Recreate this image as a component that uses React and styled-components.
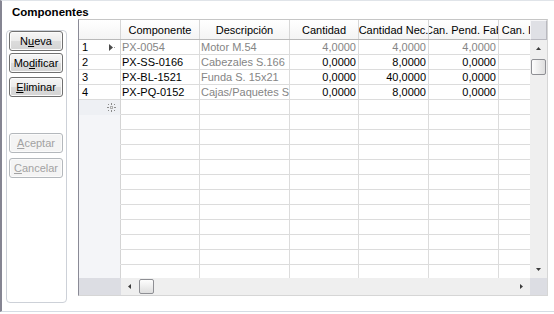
import React from "react";
import styled, { createGlobalStyle } from "styled-components";

const GlobalStyle = createGlobalStyle`
  body {
    margin: 0;
    background: #ffffff;
    font-family: "Liberation Sans", Arial, sans-serif;
    font-size: 11px;
    color: #000000;
  }
`;

const Frame = styled.div`
  width: 554px;
  box-sizing: border-box;
  border-left: 2px solid #858592;
  border-top: 1px solid #e0e4e9;
  border-bottom: 1px solid #d5dce4;
  padding-bottom: 8px;
`;

const Title = styled.div`
  height: 18px;
  box-sizing: border-box;
  padding: 5px 0 0 10px;
  line-height: 13px;
  font-size: 11.5px;
  font-weight: bold;
`;

const Body = styled.div`
  display: flex;
  align-items: flex-start;
  gap: 11px;
  padding-left: 4px;
`;

const ButtonBox = styled.div`
  margin-top: 11px;
  width: 61px;
  height: 273px;
  box-sizing: border-box;
  border: 1px solid #cdd1d8;
  border-radius: 4px;
  padding: 0 3px 0 2px;
  display: flex;
  flex-direction: column;
`;

const Btn = styled.button`
  margin-top: ${(p) => p.$gap || 0}px;
  width: 54px;
  height: 20px;
  padding: 0;
  box-sizing: border-box;
  font-family: "Liberation Sans", Arial, sans-serif;
  font-size: 11px;
  line-height: 18px;
  border-radius: 3px;
  border: 1px solid ${(p) => (p.disabled ? "#b4b8bc" : "#707070")};
  color: ${(p) => (p.disabled ? "#a2a2a2" : "#000000")};
  background: ${(p) =>
    p.disabled
      ? "#f4f4f4"
      : "linear-gradient(#f6f6f6 0%, #ebebeb 50%, #dcdcdc 51%, #d4d4d4 100%)"};
  box-shadow: inset 0 0 0 1px ${(p) => (p.disabled ? "#fbfbfb" : "#fbfbfb")};
  text-align: center;
`;

const Grid = styled.div`
  width: 470px;
  height: 277px;
  box-sizing: border-box;
  border: 1px solid;
  border-color: #c6c6c6 #d6d6d6 #d6d6d6 #8a8a96;
  display: grid;
  grid-template-columns: 451px 17px;
  grid-template-rows: 258px 17px;
`;

const DataArea = styled.div`
  overflow: hidden;
  display: flex;
  flex-direction: column;
`;

const HeaderRow = styled.div`
  display: flex;
  height: 20px;
  flex-shrink: 0;
  box-sizing: border-box;
  border-bottom: 1px solid #b9b9b9;
  background: linear-gradient(#ffffff, #f4f4f4);
`;

const HeadCell = styled.div`
  flex: 0 0 ${(p) => p.$w}px;
  box-sizing: border-box;
  border-right: 1px solid #d6d6d6;
  display: flex;
  justify-content: center;
  align-items: center;
  overflow: hidden;
  white-space: nowrap;

  span {
    flex-shrink: 0;
  }
`;

const Row = styled.div`
  display: flex;
  height: 15px;
  flex-shrink: 0;
`;

const RowHead = styled.div`
  flex: 0 0 42px;
  box-sizing: border-box;
  border-right: 1px solid #d4d4d4;
  border-bottom: 1px solid
    ${(p) => (p.$kind === "data" ? "#dcdcdc" : "transparent")};
  background: ${(p) =>
    p.$kind === "data" ? "#ffffff" : p.$kind === "new" ? "#eef0f4" : "#f4f5f8"};
  display: flex;
  align-items: center;
  padding: 0 4px 0 3px;
  line-height: 14px;

  svg {
    margin-left: auto;
  }
`;

const Cell = styled.div`
  flex: 0 0 ${(p) => p.$w}px;
  box-sizing: border-box;
  border-right: 1px solid #dcdcdc;
  border-bottom: 1px solid #dcdcdc;
  padding: 0 2px 0 1px;
  line-height: 14px;
  overflow: hidden;
  white-space: nowrap;
  text-align: ${(p) => (p.$right ? "right" : "left")};
  color: ${(p) => (p.$muted ? "#858585" : "#000000")};
`;

const VScroll = styled.div`
  display: flex;
  flex-direction: column;
  background: #efefef;
`;

const VStub = styled.div`
  height: 20px;
  flex-shrink: 0;
  box-sizing: border-box;
  background: #dfe0e5;
  border: 1px solid;
  border-color: #f6f6f8 #b9b9c0 #b9b9c0 #f6f6f8;
`;

const ArrowBtn = styled.div`
  flex: 0 0 17px;
  display: flex;
  align-items: center;
  justify-content: center;
`;

const Thumb = styled.div`
  width: 15px;
  height: ${(p) => (p.$vertical ? 16 : 15)}px;
  margin: ${(p) => (p.$vertical ? "1px 0 0 1px" : "1px 0 0 1px")};
  flex-shrink: 0;
  box-sizing: border-box;
  border: 1px solid #8e8f94;
  border-radius: 2px;
  background: linear-gradient(
    ${(p) => (p.$vertical ? "to right" : "to bottom")},
    #fdfdfd,
    #dedede
  );
`;

const Spacer = styled.div`
  flex: 1;
`;

const HScroll = styled.div`
  display: flex;
  background: #efefef;
`;

const HRowHead = styled.div`
  flex: 0 0 42px;
  background: #dcdde3;
`;

const Corner = styled.div`
  background: #dcdde3;
`;

const COLS = [
  { key: "comp", w: 79, title: "Componente" },
  { key: "desc", w: 90, title: "Descripción", muted: true },
  { key: "cant", w: 69, title: "Cantidad", right: true },
  { key: "nec", w: 70, title: "Cantidad Nec.", right: true },
  { key: "pend", w: 70, title: "Can. Pend. Fab", right: true },
  { key: "inic", w: 61, title: "Can. Inicial", right: true },
];

const ROWS = [
  { n: 1, comp: "PX-0054", desc: "Motor M.54", cant: "4,0000", nec: "4,0000", pend: "4,0000", muted: true, current: true },
  { n: 2, comp: "PX-SS-0166", desc: "Cabezales S.166", cant: "0,0000", nec: "8,0000", pend: "0,0000" },
  { n: 3, comp: "PX-BL-1521", desc: "Funda S. 15x21", cant: "0,0000", nec: "40,0000", pend: "0,0000" },
  { n: 4, comp: "PX-PQ-0152", desc: "Cajas/Paquetes Sobres", cant: "0,0000", nec: "8,0000", pend: "0,0000" },
];

const EMPTY_ROWS = 11;

const CurrentMark = () => (
  <svg width="7" height="9" viewBox="0 0 7 9">
    <path d="M0 1 L4 4.5 L0 8 Z" fill="#4a4a4a" />
    <rect x="5" y="4" width="1" height="1" fill="#a0a0a0" />
  </svg>
);

const NewMark = () => (
  <svg width="9" height="9" viewBox="0 0 9 9" fill="#8c8c8c">
    <rect x="4" y="0" width="1" height="2" />
    <rect x="4" y="7" width="1" height="2" />
    <rect x="0" y="4" width="2" height="1" />
    <rect x="7" y="4" width="2" height="1" />
    <rect x="1" y="1" width="1" height="1" />
    <rect x="7" y="1" width="1" height="1" />
    <rect x="1" y="7" width="1" height="1" />
    <rect x="7" y="7" width="1" height="1" />
    <rect x="3" y="3" width="3" height="3" fill="#b0b0b0" />
    <rect x="4" y="4" width="1" height="1" fill="#eef0f4" />
  </svg>
);

const Arrow = ({ dir }) => {
  const d = {
    up: "M0 3 L2.5 0 L5 3 Z",
    down: "M0 0 L5 0 L2.5 3 Z",
    left: "M3 0 L3 5 L0 2.5 Z",
    right: "M0 0 L3 2.5 L0 5 Z",
  }[dir];
  const vertical = dir === "up" || dir === "down";
  return (
    <svg width={vertical ? 5 : 3} height={vertical ? 3 : 5}>
      <path d={d} fill="#3c3c3c" />
    </svg>
  );
};

export default function App() {
  return (
    <>
      <GlobalStyle />
      <Frame>
        <Title>Componentes</Title>
        <Body>
          <ButtonBox>
            <Btn>
              N<u>u</u>eva
            </Btn>
            <Btn $gap={2}>
              Mo<u>d</u>ificar
            </Btn>
            <Btn $gap={4}>
              <u>E</u>liminar
            </Btn>
            <Btn $gap={36} disabled>
              <u>A</u>ceptar
            </Btn>
            <Btn $gap={5} disabled>
              <u>C</u>ancelar
            </Btn>
          </ButtonBox>

          <Grid>
            <DataArea>
              <HeaderRow>
                <HeadCell $w={42} />
                {COLS.map((c) => (
                  <HeadCell key={c.key} $w={c.w}>
                    <span>{c.title}</span>
                  </HeadCell>
                ))}
              </HeaderRow>

              {ROWS.map((r) => (
                <Row key={r.n}>
                  <RowHead $kind="data">
                    {r.n}
                    {r.current && <CurrentMark />}
                  </RowHead>
                  {COLS.map((c) => (
                    <Cell
                      key={c.key}
                      $w={c.w}
                      $right={c.right}
                      $muted={r.muted || c.muted}
                    >
                      {r[c.key] || ""}
                    </Cell>
                  ))}
                </Row>
              ))}

              <Row>
                <RowHead $kind="new">
                  <NewMark />
                </RowHead>
                {COLS.map((c) => (
                  <Cell key={c.key} $w={c.w} />
                ))}
              </Row>

              {Array.from({ length: EMPTY_ROWS }, (_, i) => (
                <Row key={"e" + i}>
                  <RowHead $kind="empty" />
                  {COLS.map((c) => (
                    <Cell key={c.key} $w={c.w} />
                  ))}
                </Row>
              ))}
            </DataArea>

            <VScroll>
              <VStub />
              <ArrowBtn>
                <Arrow dir="up" />
              </ArrowBtn>
              <Thumb $vertical style={{ marginTop: 2 }} />
              <Spacer />
              <ArrowBtn>
                <Arrow dir="down" />
              </ArrowBtn>
            </VScroll>

            <HScroll>
              <HRowHead />
              <ArrowBtn>
                <Arrow dir="left" />
              </ArrowBtn>
              <Thumb />
              <Spacer />
              <ArrowBtn>
                <Arrow dir="right" />
              </ArrowBtn>
            </HScroll>

            <Corner />
          </Grid>
        </Body>
      </Frame>
    </>
  );
}
